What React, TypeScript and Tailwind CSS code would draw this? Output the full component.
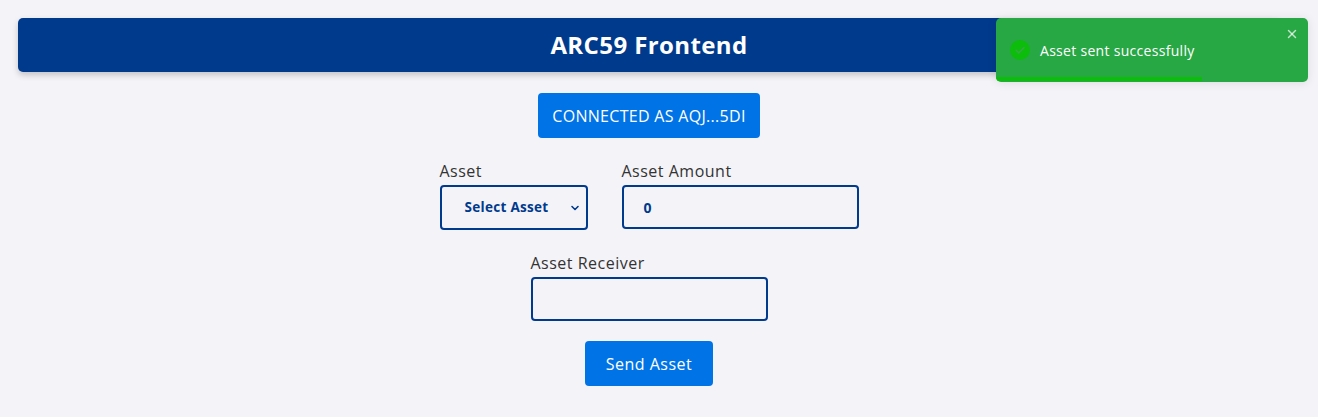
import { X } from 'lucide-react';

const font = { fontFamily: '"Open Sans", "Noto Sans", Arial, sans-serif' };

function Label({ children }: { children: React.ReactNode }) {
  return <label className="block text-[16px] leading-[24px] tracking-[0.5px] text-[#333] mb-[2px]">{children}</label>;
}

function Toast() {
  return (
    <div className="absolute top-[18px] right-[10px] w-[312px] h-[64px] rounded-[5px] bg-[#28a745] shadow-[0_1px_10px_rgba(0,0,0,0.1)] overflow-hidden">
      <div className="flex items-center h-full pl-[14px]">
        <svg width="20" height="20" viewBox="0 0 20 20" className="shrink-0">
          <circle cx="10" cy="10" r="10" fill="#0cbd0c" />
          <path d="M6 10.2l2.7 2.7L14 7.6" fill="none" stroke="#37a747" strokeWidth="1.6" strokeLinecap="round" strokeLinejoin="round" />
        </svg>
        <span className="ml-[10px] text-[14px] tracking-[0.3px] text-white">Asset sent successfully</span>
      </div>
      <X className="absolute top-[9px] right-[9px] w-[14px] h-[14px] text-white/70" strokeWidth={2.5} />
      <div className="absolute left-0 bottom-[1px] h-[4px] w-[206px] bg-[#0cbd0c]" />
    </div>
  );
}

export default function App() {
  return (
    <div className="relative min-h-screen bg-[#f3f3f8]" style={font}>
      <div className="w-[1298px] px-[18px] pt-[18px] flex flex-col items-center">
        <header className="w-full h-[54px] rounded-[5px] bg-[#003a8c] shadow-[0_3px_6px_rgba(0,0,0,0.2)] flex items-center justify-center">
          <h1 className="text-[24px] font-bold text-white tracking-[0.4px]">ARC59 Frontend</h1>
        </header>

        <button className="mt-[21px] h-[45px] w-[222px] rounded-[4px] bg-[#0073e6] text-white text-[16px] tracking-[0.3px] uppercase">
          Connected as AQJ...5DI
        </button>

        <div className="mt-[21px] flex gap-[34px]">
          <div>
            <Label>Asset</Label>
            <div className="relative w-[148px] h-[45px] rounded-[4px] border-2 border-[#003a8c] flex items-center justify-center">
              <span className="text-[13.5px] tracking-[0.3px] font-bold text-[#003a8c] -ml-[14px]">Select Asset</span>
              <svg width="10" height="10" viewBox="0 0 10 10" className="absolute right-[6px] top-1/2 -translate-y-1/2">
                <path d="M2 3.5l3 3 3-3" fill="none" stroke="#003a8c" strokeWidth="1.6" strokeLinecap="round" strokeLinejoin="round" />
              </svg>
            </div>
          </div>
          <div>
            <Label>Asset Amount</Label>
            <div className="w-[237px] h-[44px] mt-[1px] rounded-[4px] border-2 border-[#003a8c] flex items-center pl-[20px]">
              <span className="text-[14px] font-bold text-[#003a8c]">0</span>
            </div>
          </div>
        </div>

        <div className="mt-[21px]">
          <Label>Asset Receiver</Label>
          <div className="w-[237px] h-[44px] rounded-[4px] border-2 border-[#003a8c]" />
        </div>

        <button className="mt-[20px] h-[45px] w-[128px] rounded-[4px] bg-[#0073e6] text-white text-[16px] tracking-[0.5px]">
          Send Asset
        </button>
      </div>
      <Toast />
    </div>
  );
}
